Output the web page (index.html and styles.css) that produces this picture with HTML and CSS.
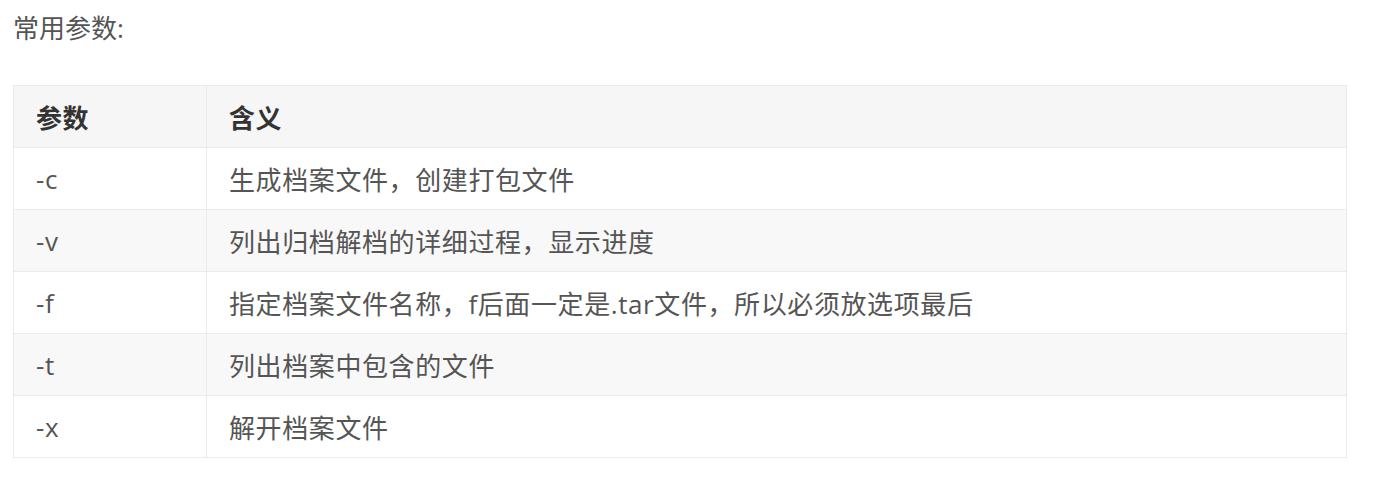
FILE: index.html
```html
<!DOCTYPE html>
<html lang="zh-CN">
<head>
    <meta charset="UTF-8">
    <meta name="viewport" content="width=device-width, initial-scale=1.0">
    <title>tar 常用参数</title>
    <link rel="stylesheet" href="styles.css">
</head>
<body>

    <div class="doc">
        <p class="lead">常用参数:</p>

        <table class="params">
            <thead>
                <tr>
                    <th class="col-opt">参数</th>
                    <th>含义</th>
                </tr>
            </thead>
            <tbody>
                <tr>
                    <td>-c</td>
                    <td>生成档案文件，创建打包文件</td>
                </tr>
                <tr>
                    <td>-v</td>
                    <td>列出归档解档的详细过程，显示进度</td>
                </tr>
                <tr>
                    <td>-f</td>
                    <td>指定档案文件名称，f后面一定是.tar文件，所以必须放选项最后</td>
                </tr>
                <tr>
                    <td>-t</td>
                    <td>列出档案中包含的文件</td>
                </tr>
                <tr>
                    <td>-x</td>
                    <td>解开档案文件</td>
                </tr>
            </tbody>
        </table>
    </div>

</body>
</html>
```

FILE: styles.css
```css
* {
    margin: 0;
    padding: 0;
    box-sizing: border-box;
}

body {
    background: #fff;
    font-family: "Open Sans", "Noto Sans CJK SC", sans-serif;
    font-size: 26px;
    color: #555;
}

.doc {
    padding: 8px 32px 0 13px;
}

.lead {
    line-height: 40px;
    margin-bottom: 37px;
}

.params {
    width: 100%;
    border-collapse: collapse;
    border: 1px solid #ebebeb;
    letter-spacing: 0.6px;
}

.params th,
.params td {
    height: 62px;
    padding: 0 22px;
    text-align: left;
    vertical-align: middle;
    border: 1px solid #ebebeb;
    font-weight: normal;
}

.params th {
    font-weight: bold;
    color: #333;
    background: #f6f6f6;
}

.col-opt {
    width: 193px;
}

/* 隔行底色 */
.params tbody tr:nth-child(even) {
    background: #f8f8f8;
}
```
